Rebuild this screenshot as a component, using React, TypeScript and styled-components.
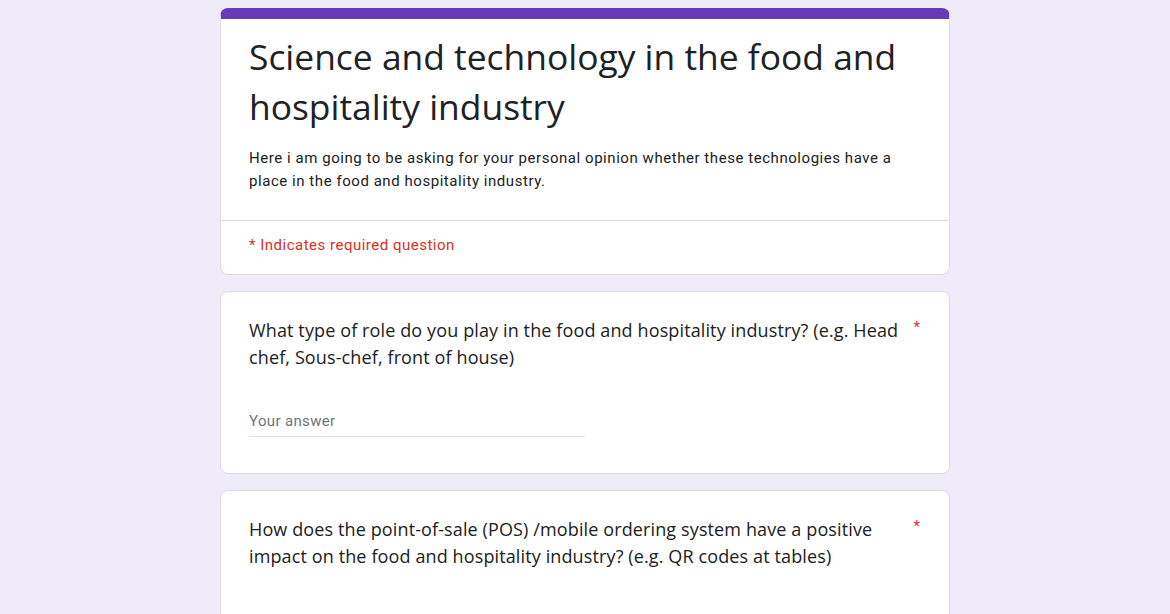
import React from "react";
import styled, { createGlobalStyle } from "styled-components";

const GlobalStyle = createGlobalStyle`
  html, body {
    margin: 0;
    padding: 0;
    background: #f0ebf8;
  }
  body {
    font-family: Roboto, "Liberation Sans", sans-serif;
  }
`;

const Page = styled.div`
  display: flex;
  flex-direction: column;
  align-items: center;
  gap: 16px;
  padding-top: 8px;
  height: 614px;
  box-sizing: border-box;
  overflow: hidden;
`;

const Card = styled.div<{ $top?: boolean }>`
  flex-shrink: 0;
  width: 730px;
  box-sizing: border-box;
  background: #fff;
  border: 1px solid #dadce0;
  border-radius: 8px;
  overflow: hidden;
  ${(p) => p.$top && "border-top: 11px solid #673ab7;"}
`;

const Header = styled.div`
  padding: 12px 28px 27px;
`;

const Title = styled.h1`
  margin: 0;
  font-family: "Open Sans", sans-serif;
  font-weight: 400;
  font-size: 35.4px;
  line-height: 50px;
  color: #202124;
`;

const Desc = styled.p`
  margin: 16px 0 0;
  font-size: 15px;
  line-height: 23px;
  letter-spacing: 0.55px;
  color: #202124;
`;

const Divider = styled.div`
  height: 1px;
  background: #dadce0;
`;

const Required = styled.div`
  padding: 14px 28px 19px;
  font-size: 15px;
  line-height: 20px;
  letter-spacing: 0.5px;
  color: #d93025;
`;

const Question = styled.div`
  padding: 25px 28px 36px;
`;

const QRow = styled.div`
  display: flex;
  gap: 10px;
  justify-content: space-between;
`;

const QText = styled.div`
  font-family: "Open Sans", sans-serif;
  font-size: 18px;
  line-height: 27px;
  letter-spacing: 0.12px;
  color: #202124;
`;

const Star = styled.span`
  color: #d93025;
  font-size: 15px;
  line-height: 20px;
  padding-right: 1px;
`;

const Answer = styled.div`
  margin-top: 40px;
  width: 336px;
  padding-bottom: 5px;
  border-bottom: 1px solid #e0e0e0;
  font-size: 15px;
  line-height: 20px;
  letter-spacing: 0.35px;
  color: #70757a;
`;

const questions = [
  "What type of role do you play in the food and hospitality industry? (e.g. Head chef, Sous-chef, front of house)",
  "How does the point-of-sale (POS) /mobile ordering system have a positive impact on the food and hospitality industry? (e.g. QR codes at tables)",
];

export default function App() {
  return (
    <>
      <GlobalStyle />
      <Page>
        <Card $top>
          <Header>
            <Title>Science and technology in the food and hospitality industry</Title>
            <Desc>
              Here i am going to be asking for your personal opinion whether these technologies have a
              place in the food and hospitality industry.
            </Desc>
          </Header>
          <Divider />
          <Required>* Indicates required question</Required>
        </Card>
        {questions.map((q) => (
          <Card key={q}>
            <Question>
              <QRow>
                <QText>{q}</QText>
                <Star>*</Star>
              </QRow>
              <Answer>Your answer</Answer>
            </Question>
          </Card>
        ))}
      </Page>
    </>
  );
}
